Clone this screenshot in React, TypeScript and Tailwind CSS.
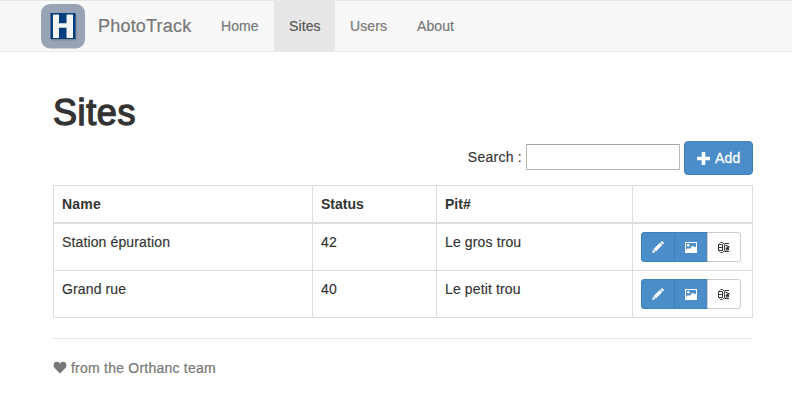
const sites = [
  { name: "Station épuration", status: 42, pit: "Le gros trou" },
  { name: "Grand rue", status: 40, pit: "Le petit trou" },
];

const links = [
  { label: "Home", active: false, width: "w-[68px]" },
  { label: "Sites", active: true, width: "w-[61px]" },
  { label: "Users", active: false, width: "w-[67px]" },
  { label: "About", active: false, width: "w-[68px]" },
];

function Logo() {
  return (
    <svg width="44" height="45" viewBox="0 0 44 45">
      <rect width="44" height="44.5" rx="9" fill="#98a4b6" />
      <rect x="10" y="10" width="25.500" height="26.500" fill="#7f8797" />
      <rect x="9.500" y="9" width="25" height="26" fill="#003d7c" />
      <path d="M12 10.500H18V19.300H25.500V10.500H32V34H25.500V23.700H18V34H12Z" fill="#f4f4f4" />
    </svg>
  );
}

function PencilIcon() {
  return (
    <svg width="12" height="12" viewBox="0 0 12 12" fill="#fff">
      <path d="M9.300 0.400Q10 0 10.600 0.500L11.600 1.500Q12.200 2.200 11.600 2.800L10.800 3.600L8.500 1.300Z" />
      <path d="M8 1.800L10.300 4.100L4 10.500L1.500 8Z" />
      <path d="M1.100 8.600L3.400 10.900L0.100 12Z" />
    </svg>
  );
}

function PictureIcon() {
  return (
    <svg width="12" height="11" viewBox="0 0 12 11">
      <path
        fill="#fff"
        fillRule="evenodd"
        d="M0 0H12V11H0ZM1 1V8L3 6L4.500 7L7.500 3.500L9 5L10 4.300L11 5.500V1Z"
      />
      <circle cx="3.200" cy="3.200" r="1.300" fill="#fff" />
    </svg>
  );
}

function PitIcon() {
  return (
    <svg width="12" height="11" viewBox="0 0 12 11" fill="none" stroke="#333">
      <path d="M0.500 2.500H4.500V8.500H0.500ZM0.500 5.500H4.500" />
      <path d="M1.500 1.500L2.500 0.500H4.500L6.500 2.500V8.500L4.500 10.500H2.500L1.500 9.500" strokeWidth="0.900" />
      <path d="M6.500 1.500H11M7.500 3L11 4.800L7.800 6.500H11M6.500 9.500H11M7.500 8.200L11 7.500" strokeWidth="1.200" />
    </svg>
  );
}

function Actions() {
  return (
    <div className="flex">
      <button className="flex h-[30px] w-[34px] items-center justify-center rounded-l-[3px] border border-[#3d80bb] bg-[#4b8dc8]">
        <PencilIcon />
      </button>
      <button className="-ml-px flex h-[30px] w-[34px] items-center justify-center border border-[#3d80bb] bg-[#4b8dc8]">
        <PictureIcon />
      </button>
      <button className="-ml-px flex h-[30px] w-[34px] items-center rounded-r-[3px] border border-[#ccc] bg-white pl-[10px]">
        <PitIcon />
      </button>
    </div>
  );
}

export default function App() {
  return (
    <div className="h-[420px] overflow-hidden bg-white font-['Liberation_Sans',Arial,sans-serif] text-[14px] leading-5 text-[#333]">
      <nav className="flex h-[52px] border-y border-[#e7e7e7] bg-[#f8f8f8] pl-[41px] text-[#777]">
        <div className="pt-[3px]">
          <Logo />
        </div>
        <a className="ml-[13px] mr-[14px] w-[94px] pt-[15px] text-[18px] tracking-[0.2px] whitespace-nowrap [-webkit-text-stroke:0.2px_#777]">
          PhotoTrack
        </a>
        {links.map((link) => (
          <a
            key={link.label}
            className={`h-[50px] pl-[15px] pt-[15px] tracking-[0.1px] [-webkit-text-stroke:0.2px] ${link.width} ${link.active ? "bg-[#e7e7e7] text-[#555]" : ""}`}
          >
            {link.label}
          </a>
        ))}
      </nav>
      <main className="ml-[53px] w-[700px]">
        <h1 className="pt-[41px] text-[36px] leading-[40px] tracking-[0.6px] [-webkit-text-stroke:1.3px_#333]">Sites</h1>
        <div className="mt-[8px] flex h-[34px] items-center justify-end gap-1">
          <label className="-mt-[2px] flex items-center gap-[4px]">
            <span className="tracking-[0.25px] [-webkit-text-stroke:0.15px]">Search :</span>
            <input className="h-[26px] w-[154px] border border-[#b8b8b8] border-t-[#a5a5a5] bg-white px-1 outline-none" />
          </label>
          <button className="flex h-[34px] w-[69px] items-center rounded-[4px] border border-[#3d80bb] bg-[#4b8dc8] pl-3 text-white [-webkit-text-stroke:0.3px]">
            <svg width="13" height="13" viewBox="0 0 13 13" fill="#fff" stroke="none">
              <path d="M4.700 0H8.300V4.700H13V8.300H8.300V13H4.700V8.300H0V4.700H4.700Z" />
            </svg>
            <span className="ml-[5px] tracking-[0.15px]">Add</span>
          </button>
        </div>
        <table className="mt-[10px] w-[700px] table-fixed border-separate border-spacing-0 border-l border-[#ddd] text-left">
          <thead>
            <tr className="h-[39px] [&>th]:border-r [&>th]:border-t [&>th]:border-b-2 [&>th]:border-[#ddd] [&>th]:px-2 [&>th]:pt-2 [&>th]:align-top">
              <th className="w-[259px] tracking-[0.2px]">Name</th>
              <th className="w-[124px]">Status</th>
              <th className="w-[196px]">Pit#</th>
              <th className="w-[120px]" />
            </tr>
          </thead>
          <tbody>
            {sites.map((site) => (
              <tr
                key={site.name}
                className="h-[47px] tracking-[0.13px] [-webkit-text-stroke:0.15px] [&>td]:border-b [&>td]:border-r [&>td]:border-[#ddd] [&>td]:px-2 [&>td]:pt-2 [&>td]:align-top"
              >
                <td>{site.name}</td>
                <td>{site.status}</td>
                <td>{site.pit}</td>
                <td>
                  <Actions />
                </td>
              </tr>
            ))}
          </tbody>
        </table>
        <hr className="mt-5 border-[#e5e5e5]" />
        <footer className="mt-[19px] flex items-center gap-[4px] text-[#777]">
          <svg width="14" height="13" viewBox="0 0 14 13" fill="#777" className="-mt-[1px]">
            <path d="M7 12.500L2 7.500C-0.500 5 0.500 0.700 3.800 0.700C5.500 0.700 6.500 1.600 7 2.700C7.500 1.600 8.500 0.700 10.200 0.700C13.500 0.700 14.500 5 12 7.500Z" />
          </svg>
          <span className="tracking-[0.23px] [-webkit-text-stroke:0.2px]">from the Orthanc team</span>
        </footer>
      </main>
    </div>
  );
}
